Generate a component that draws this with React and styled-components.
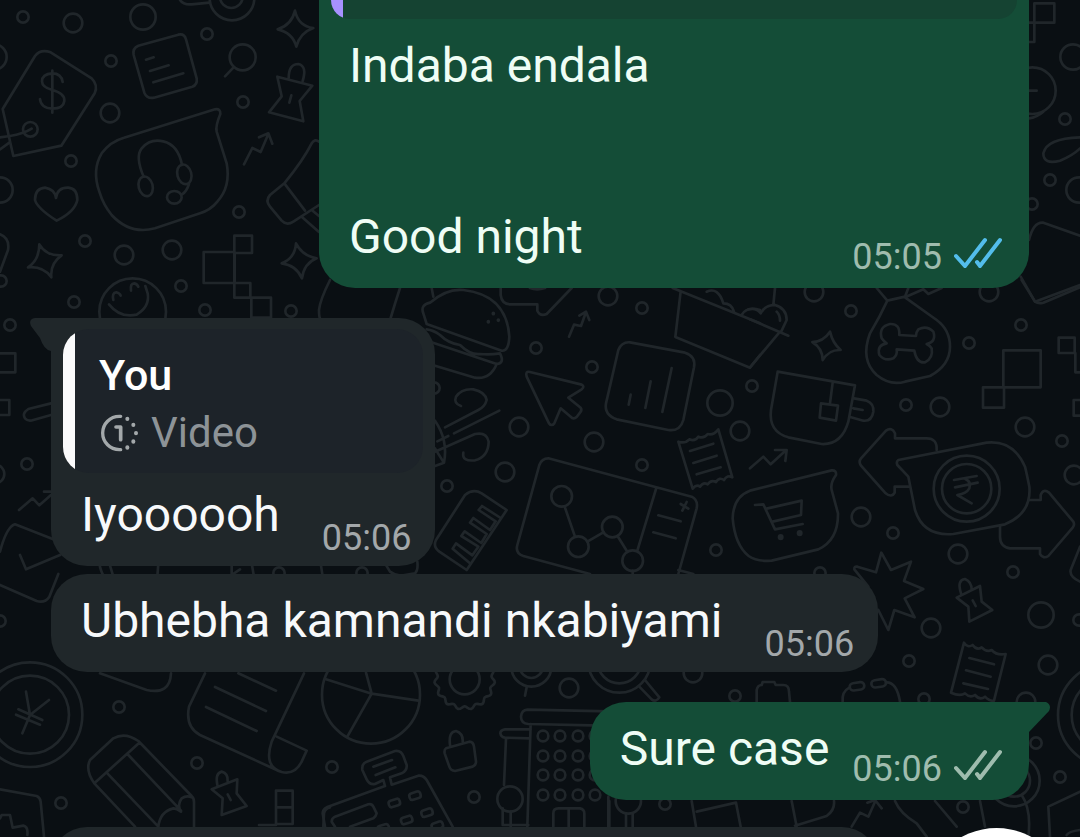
import React from "react";
import styled, { createGlobalStyle } from "styled-components";

const GlobalStyle = createGlobalStyle`
  * {
    box-sizing: border-box;
  }

  body {
    margin: 0;
    background: #0a0f13;
    font-family: Roboto, "Noto Sans", sans-serif;
  }

  p {
    margin: 0;
  }
`;

const Screen = styled.main`
  position: relative;
  height: 100vh;
  overflow: hidden;
  background: #0a0f13;
`;

/* doodles behind the conversation */
const Backdrop = styled.svg`
  position: absolute;
  inset: 0;
  width: 100%;
  height: 100%;
  fill: none;
  stroke: #20262a;
  stroke-width: 8;
  stroke-linecap: round;
  stroke-linejoin: round;
`;

const Conversation = styled.div`
  position: relative;
  display: flex;
  flex-direction: column;
  align-items: flex-start;
  padding: 0 51px;
`;

const Bubble = styled.article`
  position: relative;
  flex: none;
  align-self: ${(props) => (props.$out ? "flex-end" : "flex-start")};
  max-width: 100%;
  margin-top: ${(props) => props.$gap || 0}px;
  border-radius: 36px;
  border-top-left-radius: ${(props) => (props.$tail === "left" ? 0 : 36)}px;
  border-top-right-radius: ${(props) => (props.$tail === "right" ? 0 : 36)}px;
  background: ${(props) => (props.$out ? "#144d37" : "#20272a")};
  color: ${(props) => (props.$out ? "#effdf5" : "#f7f9fb")};
`;

/* continues above the top of the view */
const LongBubble = styled(Bubble)`
  align-self: stretch;
  margin-left: 268px;
  border-top-left-radius: 0;
  border-top-right-radius: 0;
`;

const NextBubble = styled(Bubble)`
  width: 827px;
  height: 98px;
`;

const Tail = styled.svg`
  position: absolute;
  top: 0;
  ${(props) => (props.$side === "left" ? "right: 100%;" : "left: 100%;")}
  width: 21px;
  height: 34px;
  fill: ${(props) => (props.$side === "left" ? "#20272a" : "#144d37")};
`;

const Body = styled.div`
  display: flex;
  justify-content: space-between;
  align-items: flex-end;
  gap: ${(props) => props.$gap}px;
  padding: ${(props) => (props.$quoted ? 13 : 18)}px 24px 0 30px;
`;

const Text = styled.p`
  padding-bottom: 23px;
  font-size: 48px;
  line-height: 57px;
  white-space: pre-line;
`;

const Meta = styled.div`
  display: flex;
  align-items: flex-start;
  gap: 12px;
  padding-right: ${(props) => (props.$out ? 3 : 0)}px;
  padding-bottom: ${(props) => (props.$out ? 10 : 7)}px;
  color: ${(props) => (props.$out ? "#9fbcae" : "#a3a8aa")};
  font-size: 36px;
  line-height: 42px;
`;

const TickIcon = styled.svg`
  flex: none;
  width: 48px;
  height: 32px;
  fill: none;
  stroke: ${(props) => (props.$read ? "#53bdeb" : "#9fbcae")};
  stroke-width: 4;
  stroke-linecap: round;
`;

const QuoteArea = styled.div`
  padding: 11px 12px 0;
`;

const Quote = styled.blockquote`
  display: flex;
  margin: 0;
  overflow: hidden;
  border-radius: 26px;
  background: #1d2329;
`;

const QuoteBar = styled.span`
  flex: none;
  width: 12px;
  background: #fafafb;
`;

const QuoteText = styled.div`
  flex: 1;
  padding: 18px 24px 12px;
`;

const QuoteEnd = styled.div`
  height: 19px;
  margin: 0 12px;
  overflow: hidden;
  border-radius: 0 0 24px 24px;
  background: #154332;
`;

const QuoteEndBar = styled(QuoteBar)`
  display: block;
  height: 100%;
  background: #a791ff;
`;

const Author = styled.p`
  font-size: 43px;
  font-weight: 500;
  line-height: 57px;
  color: #ffffff;
`;

const Attachment = styled.p`
  display: flex;
  align-items: center;
  gap: 12px;
  font-size: 42px;
  line-height: 57px;
  color: #8d9397;
`;

const OnceIcon = styled.svg`
  width: 40px;
  height: 38px;
  fill: none;
  stroke: #a3a8aa;
  stroke-width: 10;
  stroke-linecap: round;
  stroke-linejoin: round;
`;

const ScrollButton = styled.button`
  position: absolute;
  right: 11px;
  bottom: -136px;
  width: 145px;
  height: 145px;
  padding: 0;
  border: 0;
  border-radius: 50%;
  background: #ffffff;
`;

const smallRings = [
  [23, 17], [207, 34], [111, 61], [243, 102], [71, 161], [239, 212], [85, 241], [181, 286],
  [74, 302], [205, 310], [291, 311], [1, 281], [10, 325], [27, 464], [1065, 119], [1050, 180],
  [1032, 204], [642, 308], [536, 348], [592, 367], [752, 386], [447, 486], [642, 465], [716, 550],
  [434, 388], [851, 311], [969, 343], [1021, 325], [906, 405], [1062, 441], [893, 533], [1013, 572],
  [820, 573], [909, 661], [924, 699], [1079, 620], [119, 707], [197, 763], [61, 803], [0, 621],
  [332, 767], [279, 573], [362, 573], [474, 797], [735, 696], [665, 804], [1036, 743], [1060, 777], [963, 807],
];

const mediumRings = [
  [73, 23], [110, 113], [124, 255], [172, 250], [814, 292], [989, 292], [608, 296], [740, 431],
  [519, 427], [594, 442], [505, 472], [940, 407], [1025, 427], [861, 517], [958, 554], [1074, 475],
  [931, 628], [1048, 665], [1026, 702], [569, 688], [693, 673], [-5, 474],
];

const largeRings = [
  [143, 17], [-6, 57], [0, 190], [1073, 57], [1079, 190], [720, 403], [1041, 615], [510, 799],
];

const windows = [736, 756, 775, 795].flatMap((y) => [543, 560, 578, 595].map((x) => [x, y]));

// scalloped outline of the gear
const gear = Array.from({ length: 121 }, (_, i) => {
  const a = (i / 120) * Math.PI * 2;
  const r = 86 + 5 * Math.sin(a * 15);
  return `${i ? "L" : "M"}${(434 + r * Math.cos(a)).toFixed(1)} ${(88 + r * Math.sin(a)).toFixed(1)}`;
}).join(" ");

const Rings = ({ at, r }) =>
  at.map(([x, y]) => <circle key={`${x}-${y}`} cx={x * 3} cy={y * 3} r={r} />);

const Wallpaper = () => (
  <Backdrop viewBox="0 0 3240 2511" preserveAspectRatio="xMidYMid slice" aria-hidden="true">
    <Rings at={smallRings} r={17} />
    <Rings at={mediumRings} r={28} />
    <Rings at={largeRings} r={38} />
    <Rings at={windows} r={16} />

    {/* top left: tag, note, headset, smiley */}
    <g>
      <circle cx="696" cy="-6" r="67" />
      <circle cx="694" cy="-10" r="34" />
      <path d="M540 0Q550 15 575 13L628 8" />
      <path d="M8 327L105 168Q122 146 152 157L275 235Q295 255 284 280L184 437L40 468Z" />
      <path d="M188 246Q184 220 157 220Q126 222 126 244Q126 262 157 270Q195 280 193 303Q190 326 157 326Q122 324 120 297M157 212V338" />
      <circle cx="91" cy="388" r="22" />
      <path d="M95 386Q70 402 30 408L0 412M28 428L0 448" />
      <path d="M415 137L535 104Q553 100 558 118L590 235Q593 254 577 260L462 293Q441 297 433 278L401 165Q397 144 415 137ZM438 179L461 172M450 213L506 196M460 247L550 220" />
      <circle cx="728" cy="172" r="39" />
      <path d="M700 203L675 229" />
      <path d="M885 32Q895 78 940 84Q900 98 889 140Q878 98 833 88Q875 75 885 32Z" />
      <path d="M832 230L937 257L899 303L910 364L807 337L845 289ZM866 234Q866 192 895 192Q922 198 908 243M874 286L868 308" />
      <path d="M732 493L757 444L782 456L805 402M777 412L805 400L817 431" />
      <path d="M372 413L645 328Q662 325 661 342Q646 378 650 395L680 490Q693 560 652 605Q632 630 600 640L465 685Q390 705 335 645Q310 615 298 575Q275 510 305 460Q330 425 372 413Z" />
      <path d="M431 530Q405 470 425 445Q450 415 490 424Q535 435 546 495M567 552Q560 575 545 584" />
      <ellipse cx="437" cy="559" rx="21" ry="30" transform="rotate(-15 437 559)" />
      <ellipse cx="553" cy="523" rx="21" ry="30" transform="rotate(-15 553 523)" />
      <ellipse cx="523" cy="592" rx="22" ry="19" />
      <path d="M170 662Q112 625 105 600Q105 565 135 563Q165 568 168 594Q172 562 205 563Q232 565 232 600Q225 635 170 662Z" />
      <path d="M118 733Q138 768 185 766Q150 790 154 832Q130 798 84 802Q118 780 118 733Z" />
      <path d="M888 730Q908 768 950 775Q912 790 906 835Q888 795 845 790Q885 775 888 730Z" />
      <circle cx="398" cy="935" r="100" />
      <path d="M327 913Q360 955 410 944Q450 920 443 880L436 858M340 900Q335 878 349 877Q360 880 362 887M393 872Q390 850 403 850Q412 852 415 860" />
      <path d="M703 707H756V759H703ZM611 756H704V849H611ZM703 849H751V893H703ZM754 893H813V953H754ZM703 759V849" />
      <path d="M957 425Q945 415 935 430Q910 480 853 550L810 585Q795 602 810 620L845 662Q860 678 880 665L957 615M853 550L915 632M935 630L957 648M905 650L957 696" />
      <path d="M0 703Q30 715 24 750L0 815M990 840Q960 900 957 930Q957 950 960 955" />
    </g>

    {/* right of the first message */}
    <g transform="translate(2100 0)">
      <circle cx="997" cy="272" r="70" />
      <path d="M987 68H1063V10H1003V126H987M987 272H1010M987 355Q1010 352 1030 335" />
      <path d="M1140 412Q1040 415 1030 460Q1030 495 1080 482Q1120 465 1140 445" />
      <path d="M987 720Q1000 665 1030 668L1140 707M962 830L1005 905L1140 855" />
    </g>

    {/* left edge */}
    <g transform="translate(0 900)">
      <path d="M0 160H46V217H0M0 300H28V345H0M153 310L85 327Q65 340 75 355Q85 366 100 360L153 345" />
      <path d="M57 630L98 595L118 616L153 585M132 575H153M0 755Q20 680 45 673L160 718M60 765L78 808L180 765" />
      <path d="M298 790Q302 815 312 830M328 790L340 830M475 790L472 830M695 790V830M720 808L695 825M755 790L762 830M962 790L968 830M1155 790L1170 815Q1190 830 1210 826L1245 820Q1255 810 1252 785" />
    </g>

    {/* burger, cursor, charts, receipt */}
    <g transform="translate(1290 840)">
      <path d="M5 24L10 50M-118 114Q-105 70 -90 24" />
      <path d="M-20 100Q-30 75 0 68Q50 25 100 30Q230 45 238 170Q236 215 215 212L-10 132Z" />
      <path d="M-10 148Q10 150 30 165Q55 190 90 195Q120 225 150 222Q180 225 210 220Q225 250 200 252L0 185M200 252Q180 300 135 293L10 256" />
      <path d="M190 100V101M175 125V126M205 120V121" strokeWidth="11" />
      <path d="M93 378Q70 370 78 350Q95 325 130 328Q165 335 170 360Q165 380 145 390L45 442M208 392L72 460M55 468L22 484M15 515L135 462Q170 455 176 485Q175 530 135 541Q95 545 100 518M15 422Q55 480 42 548L15 558M15 505Q30 530 40 545" />
      <path d="M212 24V45Q215 72 240 73H322V92Q330 110 350 102L425 24M300 24Q320 32 345 24" />
      <path d="M417 170L432 134L453 138L468 96M448 107L468 95L478 120" />
      <path d="M290 290Q285 272 300 276L455 314Q465 320 455 328L415 353L452 383Q457 390 450 398L440 411Q430 420 422 410L392 385L373 430Q365 440 357 430Z" />
      <path d="M600 187L765 218Q798 228 792 262L760 420Q750 455 715 450L560 418Q522 405 528 370L565 210Q575 185 600 187ZM602 344L596 374M662 304L646 384M725 264L697 396" />
      <path d="M728 24L990 130M752 34L736 171L960 263L990 225M830 35Q865 20 880 70Q905 70 912 95M935 105Q950 78 990 90" />
      <path d="M745 485Q765 492 778 478Q795 485 805 470Q822 477 833 462Q850 467 865 448L907 592Q892 583 882 600Q868 590 858 606Q843 598 833 613Q820 605 810 620Q800 612 788 626ZM780 513L850 491M790 549L860 527M800 583L872 562" />
      <path d="M745 882L800 685Q805 660 785 650L355 535Q335 535 328 555L262 795Q255 820 280 828L480 882M678 627L622 812M745 870L790 882M404 680L435 770M472 785L520 757M563 769L592 815M608 872V882M685 706L752 724M670 757L737 775M752 672L775 686M770 666L757 692" />
      <circle cx="395" cy="649" r="31" />
      <circle cx="445" cy="800" r="31" />
      <circle cx="547" cy="741" r="31" />
      <circle cx="608" cy="842" r="31" />
      <path d="M18 780L105 645Q130 625 155 640L230 690L110 870L28 815Q8 800 18 780Z" />
      <path d="M68 806L78 790L127 826L145 800L94 768L104 754L154 789L170 762L120 728L130 714L180 750L197 724L146 690L156 678L212 714M68 806L118 848" />
    </g>

    {/* bone bag, mug, cart, exchange */}
    <g transform="translate(2250 840)">
      <path d="M-5 88Q20 82 32 100Q45 75 75 75Q110 85 110 120L95 152M80 95Q90 105 90 122M75 24L70 75M0 118L115 167M90 155L0 262" />
      <path d="M380 24L412 62L465 50L475 24M412 62Q390 110 360 160Q330 240 380 285Q420 318 465 305L540 288Q600 255 600 200Q600 150 560 120L465 52L520 28L535 42L575 24" />
      <path d="M448 165Q450 130 420 132Q385 140 395 175Q402 185 410 190Q380 195 388 225Q405 245 430 235Q443 225 440 208L493 212Q500 250 525 247Q550 235 545 205Q540 197 530 192Q560 185 550 155Q530 135 505 148Q497 158 498 168Z" />
      <path d="M240 155Q248 190 272 210Q238 208 218 240Q218 205 187 186Q220 185 240 155Z" />
      <path d="M83 275L315 316L295 425Q275 495 215 492L115 472Q55 455 63 390ZM248 308L240 370M213 370L264 377L258 422L209 413ZM312 355L350 362Q372 370 370 395Q365 425 340 422L303 412M310 385L338 390" />
      <path d="M760 211H872V322H760ZM699 322H762V383H699ZM926 173H974V219H926ZM976 219V277H990M990 360H971V407H990" />
      <path d="M560 510Q562 475 530 475H435V460Q425 440 408 452L333 535Q325 545 333 557L405 638Q425 655 434 638V620H478" />
      <path d="M445 540L710 488Q790 480 825 560Q830 580 838 620Q845 700 765 733L610 762Q520 770 495 690L475 590L442 555Q438 545 445 540Z" />
      <circle cx="650" cy="626" r="99" />
      <circle cx="650" cy="626" r="74" />
      <path d="M612 600L680 588M615 622L683 608M645 596Q665 605 658 625Q650 640 622 645L665 670" />
      <path d="M838 660H872V645Q880 625 897 638L970 725Q975 735 968 743L895 828Q880 838 870 822V805H780Q750 800 750 770V740" />
      <path d="M0 565L40 530L62 553L108 511M75 510H110L106 543" />
      <path d="M0 632L245 571Q260 570 258 585Q240 610 245 630L264 700Q265 780 205 808L65 842Q20 845 -4 828Q-45 795 -52 715Q-50 650 0 632Z" />
      <path d="M15 675L40 673L75 748L158 732M50 686L155 662L153 705L68 725" />
      <path d="M92 771V772M149 759V760" strokeWidth="18" />
      <path d="M815 0L855 65Q865 72 880 68L990 22M990 800L962 870Q958 890 990 905" />
    </g>

    {/* starburst, pin, receipt */}
    <g transform="translate(2520 1620)">
      <path d="M85 140L43 88Q42 78 52 80L108 97L124 38L153 90L213 65L192 123L250 147L194 175L224 232L163 210L145 270L115 210" />
      <path d="M350 173L420 138L425 185L457 210L388 245L385 200ZM363 160Q350 120 375 117Q395 125 395 150M398 181L407 198" />
      <path d="M372 308Q383 325 398 315Q410 332 425 322Q440 338 455 330Q470 347 497 342L462 482Q450 485 435 470Q420 482 405 465Q390 475 375 460Q360 470 333 458ZM388 354L462 373M378 391L452 410M370 430L444 447" />
      <rect x="29" y="428" width="44" height="22" rx="11" transform="rotate(-8 51 439)" />
      <rect x="94" y="419" width="44" height="22" rx="11" transform="rotate(-8 116 430)" />
      <path d="M8 485Q5 455 28 443M138 427Q170 425 180 485" />
    </g>

    {/* coin, scroll, pencil */}
    <g transform="translate(0 1680)">
      <path d="M0 75L110 123Q135 130 148 110L175 42" />
      <circle cx="90" cy="464" r="157" />
      <circle cx="90" cy="464" r="117" />
      <path d="M78 395L90 465L147 420M90 465L67 520M55 448L127 480M48 464L120 494" />
      <path d="M300 340L440 390Q510 405 513 340M615 340L567 440Q555 500 600 525L830 630M912 340L815 545Q790 620 845 636Q885 645 905 605L920 572L830 530M715 340L828 392M645 381L798 453M618 441L770 513" />
      <path d="M405 800L283 670Q255 630 270 600L340 535Q375 515 415 543L575 708Q583 715 582 730V800M283 670L418 548M322 640L475 800M385 585L543 752M475 800Q480 755 520 745Q530 745 543 755Q530 735 545 715Q560 705 575 712" />
      <path d="M635 688L712 658L710 700L740 738L665 765L668 715ZM652 675Q645 640 665 635Q685 640 683 665M683 703L692 720" />
      <path d="M828 692H878V792H828ZM828 742H878M777 795H828M970 800L972 760Q975 745 990 742" />
      <path d="M0 688L110 708Q120 712 122 725L132 830M0 775L5 765H30L38 803L70 797Q85 800 82 825" />
    </g>

    {/* pie, gear, till, building */}
    <g transform="translate(960 1950)">
      <circle cx="153" cy="134" r="147" />
      <path d="M155 131L18 88M155 131L138 68M155 131L295 152M155 131L82 260" />
      <circle cx="434" cy="88" r="45" />
      <path d={gear} />
      <circle cx="634" cy="50" r="60" />
      <circle cx="634" cy="50" r="34" />
      <path d="M620 112L615 137" />
      <path d="M378 295L448 275Q460 275 462 290L468 335Q468 345 458 350L405 363Q392 362 388 350L374 310Q372 298 378 295ZM390 285Q385 245 408 243Q430 250 428 275" />
      <path d="M15 530L8 490Q8 478 20 472L195 408L190 390L165 402Q148 405 140 388L127 360Q125 340 140 335L225 303Q243 300 250 318L260 345Q262 362 245 370L210 382L215 404L295 377Q310 375 320 390L398 530M160 350L216 330M167 375L226 352" />
      <path d="M45 530L35 515Q35 505 45 500L145 463Q155 460 160 470L170 490Q168 500 160 505L90 530" />
      {[[223, 459], [285, 437], [260, 510], [321, 488], [352, 527], [190, 535]].map(([x, y]) => (
        <rect key={x} x={x - 17} y={y - 10} width="34" height="20" rx="8" transform={`rotate(-18 ${x} ${y})`} />
      ))}
      <path d="M870 184L622 179Q605 180 603 200Q603 220 625 222L815 226M632 222L622 530M632 238H555Q541 240 541 250Q543 262 555 263L628 265M558 266L552 405M548 475V525H625M572 485V530M700 530V490Q700 475 715 475H780Q793 478 793 490V530M746 475V530M865 440V530" />
    </g>

    {/* around the last message */}
    <g transform="translate(1740 1980)">
      <circle cx="118" cy="5" r="93" />
      <circle cx="118" cy="5" r="65" />
      <path d="M178 80L215 118Q228 128 238 112L195 60" />
      <path d="M530 126V90Q533 75 545 75L548 66H583L587 75H610Q627 75 627 95L630 126" />
      <circle cx="145" cy="423" r="38" />
      <path d="M88 423V500M138 460V500M158 460V500M335 423L348 500M350 455L468 428L482 500M635 423L650 500M762 423Q765 450 740 468L645 497" />
      <path d="M815 500L840 458L865 470L885 425M862 428L885 420L905 445M945 423Q960 460 1010 490L1040 530M1065 423L1130 500M1200 423L1215 500M1325 405Q1355 450 1345 530M1410 530L1405 440L1500 395M1460 525Q1465 515 1500 510" />
      <circle cx="1302" cy="362" r="77" />
      <circle cx="1302" cy="362" r="48" />
      <circle cx="1590" cy="165" r="156" />
      <circle cx="1590" cy="165" r="115" />
    </g>
  </Backdrop>
);

const Ticks = ({ read }) => (
  <TickIcon $read={read} viewBox="0 0 48 32" role="img" aria-label={read ? "Read" : "Delivered"}>
    <path d="M2 20L11 30L31 4" />
    <path d="M23 26L26 30L46 4" />
  </TickIcon>
);

const ViewOnce = () => (
  <OnceIcon viewBox="301 341 120 114" aria-hidden="true">
    <path d="M366 448H362A50 50 0 0 1 362 348H366" />
    <path d="M386 355V356M404 373V374M412 398V399M404 423V424M386 441V442" strokeWidth="12" />
    <path d="M352 380H366V418" strokeWidth="11" />
  </OnceIcon>
);

const Message = ({ text, time, out, read, gap, textGap, tail, quote }) => (
  <Bubble $out={out} $gap={gap} $tail={tail}>
    {tail && (
      <Tail $side={tail} viewBox="0 0 21 34" aria-hidden="true">
        {tail === "left" ? (
          <path d="M21 0H5Q-2 1 1 8L10 20Q14 32 21 33Z" />
        ) : (
          <path d="M0 0H17Q23 3 20 9L0 30Z" />
        )}
      </Tail>
    )}
    {quote}
    <Body $gap={textGap} $quoted={Boolean(quote)}>
      <Text>{text}</Text>
      <Meta $out={out}>
        <time>{time}</time>
        {out && <Ticks read={read} />}
      </Meta>
    </Body>
  </Bubble>
);

const App = () => {
  return (
    <>
      <GlobalStyle />
      <Screen>
        <Wallpaper />
        <Conversation>
          <LongBubble $out>
            <QuoteEnd>
              <QuoteEndBar />
            </QuoteEnd>
            <Body $gap={23}>
              <Text>{"Indaba endala\n\n\nGood night"}</Text>
              <Meta $out>
                <time>05:05</time>
                <Ticks read />
              </Meta>
            </Body>
          </LongBubble>

          <Message
            text="Iyoooooh"
            time="05:06"
            gap={30}
            textGap={42}
            tail="left"
            quote={
              <QuoteArea>
                <Quote>
                  <QuoteBar />
                  <QuoteText>
                    <Author>You</Author>
                    <Attachment>
                      <ViewOnce />
                      Video
                    </Attachment>
                  </QuoteText>
                </Quote>
              </QuoteArea>
            }
          />
          <Message text="Ubhebha kamnandi nkabiyami" time="05:06" gap={8} textGap={42} />
          <Message text="Sure case" time="05:06" out gap={30} textGap={23} tail="right" />
          <NextBubble $gap={27} />
        </Conversation>
        <ScrollButton type="button" aria-label="Scroll to latest message" />
      </Screen>
    </>
  );
};

export default App;
